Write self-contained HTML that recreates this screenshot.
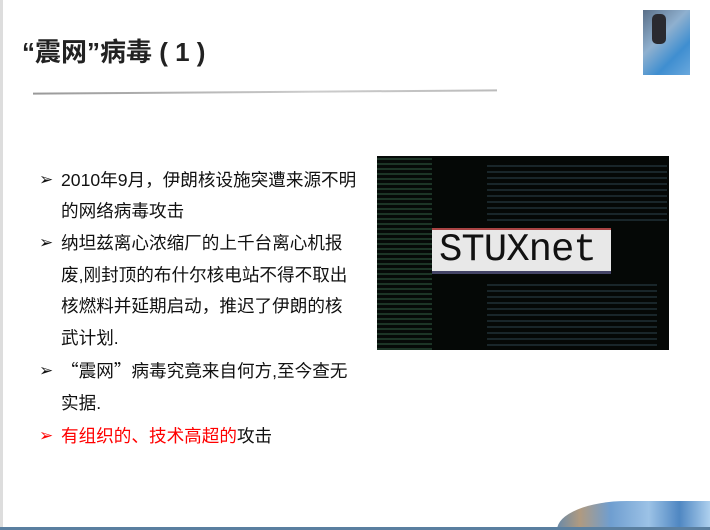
<!DOCTYPE html>
<html style="overflow:hidden;height:530px"><head><meta charset="utf-8"><style>
body{margin:0;width:710px;height:530px;position:relative;overflow:hidden;background:#fff;font-family:"Liberation Sans","Noto Sans CJK SC",sans-serif;}
.l{position:absolute;left:61px;font-size:17.6px;color:#111;white-space:nowrap;line-height:20px;}
.b{position:absolute;left:39px;font-size:17px;color:#111;line-height:20px;font-family:"DejaVu Sans",sans-serif;}
.red{color:#f00}
.q{font-family:"Noto Sans CJK SC",sans-serif}
</style></head><body>
<div style="position:absolute;left:0;top:0;width:3px;height:530px;background:#ddd"></div>
<div style="position:absolute;left:22px;top:35px;font-size:26px;font-weight:bold;color:#222;white-space:nowrap;line-height:34px">“震网”病毒 ( 1 )</div>
<div style="position:absolute;left:33px;top:91px;width:464px;height:2px;background:linear-gradient(90deg,#999,#ccc 60%,#bbb);transform:rotate(-0.4deg)"></div>
<div style="position:absolute;left:643px;top:10px;width:47px;height:65px;background:linear-gradient(135deg,#5a6f88 0%,#8fb0cf 40%,#3f8ed0 70%,#6aa8dd 100%)"></div>
<div style="position:absolute;left:652px;top:14px;width:14px;height:30px;background:#2a2a30;border-radius:5px"></div>

<div class="b" style="top:170px">➢</div><div class="l" style="top:170px">2010年9月，伊朗核设施突遭来源不明</div>
<div class="l" style="top:201px">的网络病毒攻击</div>
<div class="b" style="top:233px">➢</div><div class="l" style="top:233px">纳坦兹离心浓缩厂的上千台离心机报</div>
<div class="l" style="top:265px">废,刚封顶的布什尔核电站不得不取出</div>
<div class="l" style="top:296px">核燃料并延期启动，推迟了伊朗的核</div>
<div class="l" style="top:328px">武计划.</div>
<div class="b" style="top:361px">➢</div><div class="l" style="top:361px"><span class="q">“</span>震网<span class="q">”</span>病毒究竟来自何方,至今查无</div>
<div class="l" style="top:393px">实据.</div>
<div class="b red" style="top:426px">➢</div><div class="l" style="top:426px"><span class="red">有组织的、技术高超的</span>攻击</div>

<div style="position:absolute;left:377px;top:156px;width:292px;height:194px;background:#050806;overflow:hidden">
<div style="position:absolute;left:0;top:0;width:55px;height:194px;background:repeating-linear-gradient(0deg,#1e3a2a 0 2px,#060a08 2px 5px);opacity:.9"></div>
<div style="position:absolute;left:110px;top:5px;width:180px;height:60px;background:repeating-linear-gradient(0deg,#22333a 0 2px,#050806 2px 6px);opacity:.7"></div>
<div style="position:absolute;left:110px;top:125px;width:170px;height:65px;background:repeating-linear-gradient(0deg,#22333a 0 2px,#050806 2px 6px);opacity:.7"></div>
<div style="position:absolute;left:55px;top:72px;width:179px;height:46px;background:#e8e8e8;border-top:2px solid #a44;border-bottom:3px solid #446;box-sizing:border-box;font-family:'Liberation Mono',monospace;font-size:39px;line-height:40px;color:#111;letter-spacing:-1px;padding-left:7px;overflow:hidden">STUXnet</div>
</div>

<div style="position:absolute;left:557px;top:501px;width:153px;height:29px;border-top-left-radius:70px 29px;background:linear-gradient(90deg,#6a8aa8 0%,#b09a80 15%,#6f9ed0 35%,#9cc2e6 60%,#4f87c2 80%,#aed0ee 100%)"></div>
<div style="position:absolute;left:0;top:527px;width:710px;height:3px;background:#5a7fa0"></div>
</body></html>
